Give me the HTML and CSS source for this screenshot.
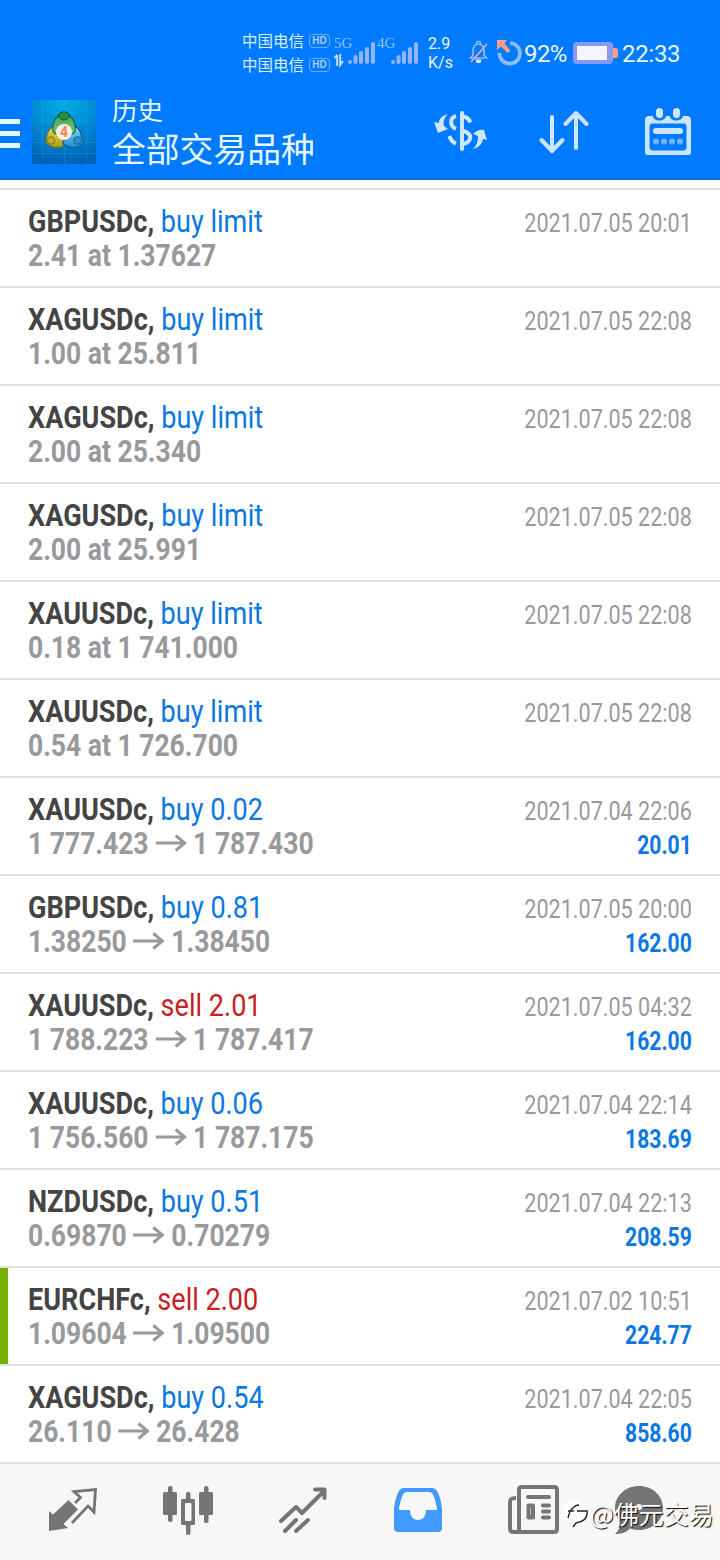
FILE: index.html
```html
<!DOCTYPE html>
<html lang="zh-CN">
<head>
<meta charset="utf-8">
<title>历史</title>
<link rel="stylesheet" href="styles.css">
</head>
<body>
<div class="screen">
<header class="header">
  <div class="status">
    <div class="carriers">
      <div class="carrier">中国电信<span class="hd">HD</span></div>
      <div class="carrier">中国电信<span class="hd">HD</span></div>
    </div>
    <svg class="signals" width="86" height="40" viewBox="0 0 86 40">
      <g font-family="Liberation Serif, serif" font-size="15" fill="#8cc2f5"><text x="0" y="16">5G</text><text x="43" y="16">4G</text></g>
      <path d="M3.200 23v11M0.500 26L3.200 23M6.200 22v11L9 29" fill="none" stroke="#c4dcf5" stroke-width="2"/>
      <g stroke="#92b4fb" stroke-width="4" stroke-linecap="round"><path d="M16 30v0M21.500 25v5M27 21v9M33 17v13M39 12v18M59 30v0M64.500 25v5M70 21v9M76 17v13M82 12v18"/></g>
    </svg>
    <div class="rate"><span>2.9</span><span>K/s</span></div>
    <svg class="bell" width="20" height="24" viewBox="0 0 20 24">
      <path d="M1.500 18h16l-2.500-3V10a5.500 6 0 0 0-11 0v5zM7.500 3.500a2 2 0 0 1 4 0" fill="none" stroke="#8ebdff" stroke-width="1.700"/>
      <path d="M6.500 19.500h6l-1 3.500h-4z" fill="#e5eaff"/><path d="M2 22L18 4" stroke="#eaa5b2" stroke-width="1.600"/>
    </svg>
    <svg class="timer" width="26" height="26" viewBox="0 0 26 26">
      <path d="M13 3a10.300 10.300 0 1 1-10.600 10" fill="none" stroke="#8fbcff" stroke-width="3.700"/>
      <path d="M0 0h10L7.500 3.500l6 7-2.700 2.500L4 6.500 0 10z" fill="#ff9d8a"/>
    </svg>
    <span class="percent">92%</span>
    <svg class="battery" width="45" height="22" viewBox="0 0 45 22"><rect x="38" y="6" width="7" height="10" rx="2" fill="#ff9f87"/><rect width="40" height="22" rx="4" fill="#8699f5"/><rect x="4" y="4" width="30" height="14" fill="#f5f4ff"/></svg>
    <span class="clock">22:33</span>
  </div>
  <div class="toolbar">
    <div class="menu"><i></i><i></i><i></i></div>
    <svg class="logo" width="64" height="64" viewBox="0 0 64 64">
      <defs>
        <radialGradient id="bg" cx=".5" cy="0" r="1"><stop offset="0" stop-color="#00b0e8"/><stop offset=".6" stop-color="#0085d0"/><stop offset="1" stop-color="#0062b8"/></radialGradient>
        <linearGradient id="gr" x2="0" y2="1"><stop stop-color="#2f9b50"/><stop offset="1" stop-color="#7fc77c"/></linearGradient>
        <linearGradient id="ye" x2="0" y2="1"><stop stop-color="#e6dd45"/><stop offset="1" stop-color="#b59c1d"/></linearGradient>
        <linearGradient id="bl" x2="0" y2="1"><stop stop-color="#8fd5f5"/><stop offset="1" stop-color="#218bd0"/></linearGradient>
      </defs>
      <rect width="64" height="64" fill="url(#bg)"/>
      <path d="M10.500 0v64M32.500 0v64M54.500 0v64M0 21.500h64M0 42.500h64M0 53.500h64" stroke="#62ccef" stroke-opacity=".16"/>
      <path d="M24 25.500c-6 1-9 7-9.500 12-2 4 0 7 4 8.500 5 2 12 2 15-2z" fill="url(#ye)" stroke="#6d7625" stroke-width="1.200"/>
      <path d="M40 25.500c6 1 9 6 9.500 11 3 4 2 8-2 10-6 2-13 1-17-3z" fill="url(#bl)" stroke="#0b5f91" stroke-width="1.200"/>
      <path d="M27 15c2-4 8-4 10 0 5 4 7 10 6 16-1 3-3 3-5 3H26c-2 0-4 0-5-3-1-6 1-12 6-16z" fill="url(#gr)" stroke="#176737" stroke-width="1.200"/>
      <ellipse cx="32" cy="16" rx="5" ry="4" fill="#278d40" stroke="#145e2b"/><circle cx="19" cy="40.500" r="3.800" fill="#bea824" stroke="#7e791e"/><circle cx="45.500" cy="40.500" r="3.800" fill="#298fce" stroke="#0d649f"/>
      <circle cx="32" cy="32" r="8" fill="#f5efe9"/>
      <text x="32" y="37" text-anchor="middle" font-family="Roboto, sans-serif" font-weight="700" font-size="14" fill="#f28545">4</text>
    </svg>
    <div class="titles"><span class="title">历史</span><span class="subtitle">全部交易品种</span></div>
    <div class="actions">
      <svg width="54" height="46" viewBox="0 -1 54 46" fill="none" stroke="#cce6ff" stroke-width="4">
        <path d="M28 4v36" stroke-linecap="round"/><path d="M22 6.800C15.500 9 15.500 17 22 20M15.500 27c1 4 3 6 6.500 7.800M28 7.500c4 0 7 2.500 8.500 6M28 21.500c11 3 11 11 0 14"/>
        <path d="M14 5C7 7 5 10 5 14L0 13l4 11 10-4-4-3c-1-4 0-8 4-12zM39 40c7-2 9-5 10-10l4 1-3-10c-4-1-8 1-11 4l5 2c0 5-1 9-5 13z" fill="#cce6ff" stroke="none"/>
      </svg>
      <svg width="50" height="46" viewBox="0 -2 50 46" fill="none" stroke="#cce6ff" stroke-width="4" stroke-linecap="round" stroke-linejoin="round"><path d="M13 7v33M2.500 30L13 41l10.500-11M37 38V4M26.500 14L37 3l10.500 11"/></svg>
      <svg width="46" height="48" viewBox="0 0 46 48">
        <path d="M4 8h4c0 6 12 6 13 0h4c0 6 12 6 13 0h4a4 4 0 0 1 4 4v32a3 3 0 0 1-3 3H3a3 3 0 0 1-3-3V12a4 4 0 0 1 4-4z" fill="#cce6ff"/>
        <rect x="4.500" y="15.500" width="37" height="27" rx="3" fill="#007aff"/><rect x="11" y="0" width="7" height="10" rx="3.500" fill="#cce6ff"/><rect x="28" y="0" width="7" height="10" rx="3.500" fill="#cce6ff"/>
        <rect x="8" y="20" width="30" height="6" rx="3" fill="#cce6ff"/><g fill="#6fb4ff"><circle cx="11" cy="33.500" r="3"/><circle cx="19" cy="33.500" r="3"/><circle cx="27" cy="33.500" r="3"/><circle cx="35" cy="33.500" r="3"/></g>
      </svg>
    </div>
  </div>
</header>
<svg width="0" height="0" class="defs"><symbol id="arrow" viewBox="0 0 31 18" preserveAspectRatio="none"><path d="M0 9h29M20 1.500L29 9l-9 7.500" fill="none" stroke="#98999c" stroke-width="3"/></symbol></svg>
<main class="list">
  <div class="row"><div class="deal"><div class="line"><b>GBPUSDc,</b> <span class="buy">buy limit</span></div><div class="line price">2.41 at 1.37627</div></div><div class="side"><div class="date">2021.07.05 20:01</div></div></div>
  <div class="row"><div class="deal"><div class="line"><b>XAGUSDc,</b> <span class="buy">buy limit</span></div><div class="line price">1.00 at 25.811</div></div><div class="side"><div class="date">2021.07.05 22:08</div></div></div>
  <div class="row"><div class="deal"><div class="line"><b>XAGUSDc,</b> <span class="buy">buy limit</span></div><div class="line price">2.00 at 25.340</div></div><div class="side"><div class="date">2021.07.05 22:08</div></div></div>
  <div class="row"><div class="deal"><div class="line"><b>XAGUSDc,</b> <span class="buy">buy limit</span></div><div class="line price">2.00 at 25.991</div></div><div class="side"><div class="date">2021.07.05 22:08</div></div></div>
  <div class="row"><div class="deal"><div class="line"><b>XAUUSDc,</b> <span class="buy">buy limit</span></div><div class="line price">0.18 at 1 741.000</div></div><div class="side"><div class="date">2021.07.05 22:08</div></div></div>
  <div class="row"><div class="deal"><div class="line"><b>XAUUSDc,</b> <span class="buy">buy limit</span></div><div class="line price">0.54 at 1 726.700</div></div><div class="side"><div class="date">2021.07.05 22:08</div></div></div>
  <div class="row"><div class="deal"><div class="line"><b>XAUUSDc,</b> <span class="buy">buy 0.02</span></div><div class="line price">1 777.423 <svg class="arrow"><use href="#arrow"/></svg> 1 787.430</div></div><div class="side"><div class="date">2021.07.04 22:06</div><div class="profit">20.01</div></div></div>
  <div class="row"><div class="deal"><div class="line"><b>GBPUSDc,</b> <span class="buy">buy 0.81</span></div><div class="line price">1.38250 <svg class="arrow"><use href="#arrow"/></svg> 1.38450</div></div><div class="side"><div class="date">2021.07.05 20:00</div><div class="profit">162.00</div></div></div>
  <div class="row"><div class="deal"><div class="line"><b>XAUUSDc,</b> <span class="sell">sell 2.01</span></div><div class="line price">1 788.223 <svg class="arrow"><use href="#arrow"/></svg> 1 787.417</div></div><div class="side"><div class="date">2021.07.05 04:32</div><div class="profit">162.00</div></div></div>
  <div class="row"><div class="deal"><div class="line"><b>XAUUSDc,</b> <span class="buy">buy 0.06</span></div><div class="line price">1 756.560 <svg class="arrow"><use href="#arrow"/></svg> 1 787.175</div></div><div class="side"><div class="date">2021.07.04 22:14</div><div class="profit">183.69</div></div></div>
  <div class="row"><div class="deal"><div class="line"><b>NZDUSDc,</b> <span class="buy">buy 0.51</span></div><div class="line price">0.69870 <svg class="arrow"><use href="#arrow"/></svg> 0.70279</div></div><div class="side"><div class="date">2021.07.04 22:13</div><div class="profit">208.59</div></div></div>
  <div class="row marked"><div class="deal"><div class="line"><b>EURCHFc,</b> <span class="sell">sell 2.00</span></div><div class="line price">1.09604 <svg class="arrow"><use href="#arrow"/></svg> 1.09500</div></div><div class="side"><div class="date">2021.07.02 10:51</div><div class="profit">224.77</div></div></div>
  <div class="row"><div class="deal"><div class="line"><b>XAGUSDc,</b> <span class="buy">buy 0.54</span></div><div class="line price">26.110 <svg class="arrow"><use href="#arrow"/></svg> 26.428</div></div><div class="side"><div class="date">2021.07.04 22:05</div><div class="profit">858.60</div></div></div>
</main>
<nav class="tabs">
  <svg width="50" height="44" viewBox="0 0 50 44"><path d="M1 23l4 3.500L20.500 12 30 21.500 15.500 36l4.500 4L1 43z" fill="#757575"/><path d="M27 15l5.500-5.500L26 3.500 47.500 1.500 46 24l-6-6-16 17" fill="none" stroke="#757575" stroke-width="2.800"/></svg>
  <svg width="52" height="50" viewBox="0 0 52 50" fill="#757575"><rect x="1" y="7" width="14" height="23" rx="1.500"/><rect x="6" y="1" width="4.500" height="36" rx="2"/><rect x="37" y="7" width="14" height="23" rx="1.500"/><rect x="42" y="1" width="4.500" height="37" rx="2"/><rect x="24" y="7" width="4.500" height="43" rx="2"/><rect x="19" y="14" width="14" height="26" rx="1.500"/><rect x="23" y="18" width="6.500" height="18" rx="1" fill="#f7f7f7"/></svg>
  <svg width="48" height="46" viewBox="0 0 48 46" fill="none" stroke="#757575" stroke-width="4" stroke-linecap="round" stroke-linejoin="round"><path d="M2 34l15-14 6 6L45 4M36 2.500h9.500V11M6 44l11-11M17 44l12-11"/></svg>
  <svg width="50" height="46" viewBox="0 0 50 46"><path fill-rule="evenodd" d="M11 1h28c2 0 4 1 5 3 3 5 5 14 5 19v18a4 4 0 0 1-4 4H5a4 4 0 0 1-4-4V23C1 18 3 9 6 4c1-2 3-3 5-3zm2.500 4C9 5 8 14 6 21c-.5 1.500 0 2 1.500 2H17c0 6 3 10 8 10s8-4 8-10h9.500c1.500 0 2-.5 1.500-2-2-7-3-16-7.500-16z" fill="#419bff"/></svg>
  <svg width="52" height="50" viewBox="0 0 52 50" fill="none" stroke="#757575"><path d="M9 13c-5 0-6 1-6 4v27c0 2 1 3 4 3h40c2 0 3-1 3-3V5c0-2-1-3-3-3H15c-2 0-3 1-3 3v42" stroke-width="4"/><path d="M21 12h21M36 20.500h6M36 26.500h6M36 32.500h6" stroke-width="4" stroke-linecap="round"/><path d="M21.500 20.500h4.500v12h-4.500z" stroke-width="4" stroke-linejoin="round"/></svg>
  <svg width="50" height="50" viewBox="0 0 50 50"><path d="M25 1c13 0 24 9 24 22s-11 22-24 22c-3 0-6-.5-9-1.500C12 48 6 49 1 49c4-4 6-8 6-12C3 33 1 29 1 23 1 10 12 1 25 1z" fill="#757575"/><g fill="#f7f7f7"><circle cx="15" cy="22" r="3"/><circle cx="25" cy="22" r="3"/></g></svg>
</nav>
<div class="watermark"><svg width="27" height="30" viewBox="0 0 27 30"><path d="M1 10C3 3 10 0 16 1l2 4c7 2 8 12 4 17-3 4-8 5-13 7l3-6c-2 0-4-2-4-4l-4 3C1 17 0 13 1 10z" fill="#fff"/><path d="M5 20c1-5 3-9 6-11 1-1 3-2 5-2M5 13h6M14 13h10c1 8-4 11-11 12l-3 4" fill="none" stroke="#222" stroke-width="1.400"/></svg><span>@佛元交易</span></div>
</div>
</body>
</html>
```
FILE: styles.css
```css
* { box-sizing: border-box; }
body { margin: 0; background: #fff; font-family: Roboto, "Noto Sans CJK SC", sans-serif; }
svg { display: block; flex: none; }
.defs { display: none; }
.screen { position: relative; width: 720px; height: 1560px; overflow: hidden; display: flex; flex-direction: column; }

.header { height: 180px; flex: none; background: #007aff; border-bottom: 2px solid #0a6ede; color: #e6f7ff; display: flex; flex-direction: column; }
.status { height: 88px; padding: 28px 36px 0 242px; display: flex; align-items: flex-start; }
.carriers { width: 92px; flex: none; display: flex; flex-direction: column; }
.carrier { height: 24px; display: flex; align-items: center; gap: 5px; font: 15.5px/24px "Noto Sans CJK SC", sans-serif; white-space: nowrap; color: #d5f0ff; }
.hd { width: 21px; height: 14px; margin-top: 2px; border: 1.5px solid #68b0ff; border-radius: 4px; font: 700 10px/12px "Liberation Sans", sans-serif; text-align: center; color: #a9ccff; }
.signals { margin-top: 4px; }
.rate { width: 41px; flex: none; padding-left: 8px; display: flex; flex-direction: column; font-size: 16px; line-height: 19px; margin-top: 6px; }
.rate span { white-space: nowrap; }
.bell { margin: 12px 0 0 8px; }
.timer { margin: 12px 0 0 8px; }
.percent, .clock { flex: none; font-size: 24px; line-height: 28px; margin-top: 12px; }
.percent { width: 49px; margin-left: 1px; letter-spacing: -.6px; }
.battery { margin-top: 14px; }
.clock { margin-left: 4px; letter-spacing: -.3px; }

.toolbar { height: 90px; display: flex; align-items: flex-start; padding-top: 3px; }
.menu { width: 20px; margin: 28px 12px 0 0; display: flex; flex-direction: column; gap: 7px; }
.menu i { height: 5px; background: #e6f7ff; }
.logo { margin-top: 9px; }
.titles { display: flex; flex-direction: column; margin-left: 16px; width: 322px; font-family: "Noto Sans CJK SC", sans-serif; }
.title { font-size: 25.500px; line-height: 35px; }
.subtitle { font-size: 33.800px; line-height: 44px; }
.actions { display: grid; grid-template-columns: 105px 106px 46px; padding-top: 17px; }

.list { flex: none; padding-top: 8px; }
.list::before { content: ""; display: block; height: 2px; background: #e2e2e2; }
.row { height: 98px; border-bottom: 2px solid #e2e2e2; padding: 14px 28px 0; display: flex; justify-content: space-between; }
.marked { background: linear-gradient(#78b000, #78b000) 0 0 / 8px 100% no-repeat; }
.deal { width: 380px; }
.line { font-size: 32px; line-height: 34px; height: 34px; white-space: nowrap; transform: scaleX(.846); transform-origin: 0 0; color: #444; }
.line.price { color: #98999c; font-weight: 700; transform: scaleX(.827); }
.buy { color: #0a78e4; }
.sell { color: #c9201f; }
.arrow { display: inline-block; width: 38px; height: 18px; vertical-align: 2px; }
.side { text-align: right; font-size: 26px; line-height: 34px; padding-top: 2px; white-space: nowrap; }
.date, .profit { transform-origin: 100% 0; }
.date { color: #98999c; transform: scaleX(.83); }
.profit { color: #0a78e4; font-weight: 700; transform: scaleX(.812); }

.tabs { flex: 1; background: #f7f7f7; display: grid; grid-template-columns: 146px 84px 146px 84px 146px 66px; justify-content: start; align-items: center; justify-items: center; padding-bottom: 4px; }
.watermark { position: absolute; left: 563px; top: 1495px; display: flex; align-items: center; color: #fff; font: 25px/36px "Noto Sans CJK SC", sans-serif; text-shadow: 1px 1px 1px #000; white-space: nowrap; }
```
